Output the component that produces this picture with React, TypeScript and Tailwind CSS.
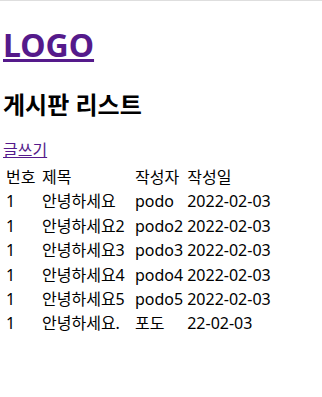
const rows = [
  { no: 1, title: '안녕하세요', writer: 'podo', date: '2022-02-03' },
  { no: 1, title: '안녕하세요2', writer: 'podo2', date: '2022-02-03' },
  { no: 1, title: '안녕하세요3', writer: 'podo3', date: '2022-02-03' },
  { no: 1, title: '안녕하세요4', writer: 'podo4', date: '2022-02-03' },
  { no: 1, title: '안녕하세요5', writer: 'podo5', date: '2022-02-03' },
  { no: 1, title: '안녕하세요.', writer: '포도', date: '22-02-03' },
];

export default function App() {
  return (
    <div className="min-h-[397px] bg-white font-['Noto_Sans','Noto_Sans_CJK_KR',sans-serif] text-black">
      <div className="h-px bg-[#dedede]" />
      <div className="px-[3px]">
        <h1 className="mt-[23px] text-[32px] font-bold leading-[42px]">
          <a href="#" className="text-[#551a8b] underline">
            LOGO
          </a>
        </h1>
        <h2 className="mt-[23px] text-[24px] font-bold leading-[32px]">게시판 리스트</h2>
        <div className="mt-[19px] text-[16px] leading-[21px]">
          <a href="#" className="text-[#551a8b] underline">
            글쓰기
          </a>
        </div>
        <table className="mt-[3px] border-separate border-spacing-[2px] text-[16px] leading-[20.4px]">
          <tbody>
            <tr>
              <td className="w-[34px] p-px">번호</td>
              <td className="w-[91px] p-px">제목</td>
              <td className="w-[49px] p-px">작성자</td>
              <td className="p-px">작성일</td>
            </tr>
            {rows.map((r, i) => (
              <tr key={i}>
                <td className="p-px">{r.no}</td>
                <td className="p-px">{r.title}</td>
                <td className="p-px">{r.writer}</td>
                <td className="p-px">{r.date}</td>
              </tr>
            ))}
          </tbody>
        </table>
      </div>
    </div>
  );
}
